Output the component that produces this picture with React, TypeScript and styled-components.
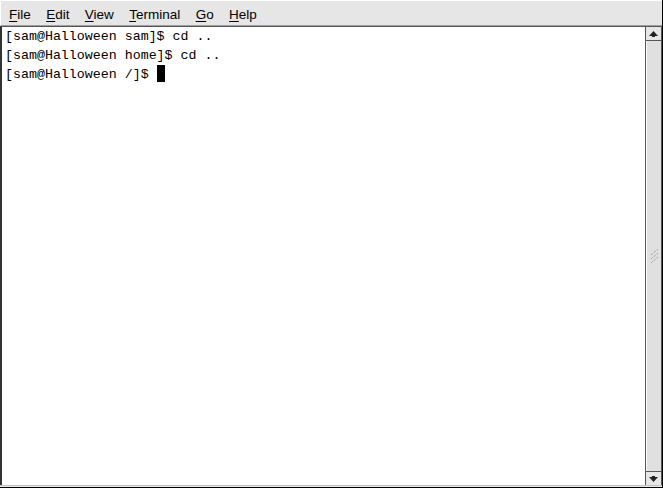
import styled, { createGlobalStyle } from 'styled-components';

const GlobalStyle = createGlobalStyle`
  html, body {
    margin: 0;
    padding: 0;
    background: #e6e6e6;
  }
`;

const Window = styled.div`
  width: 663px;
  height: 488px;
  box-sizing: border-box;
  display: flex;
  flex-direction: column;
  background: #e6e6e6;
  border-right: 1px solid #000;
  border-bottom: 1px solid #000;
`;

const MenuBar = styled.div`
  height: 26px;
  box-sizing: border-box;
  display: flex;
  align-items: center;
  padding: 3px 0 0 8px;
  gap: 15.4px;
  border-top: 1px solid #fff;
  border-left: 1px solid #fff;
  border-bottom: 1px solid #a0a0a0;
  font-family: 'Liberation Sans', Arial, sans-serif;
  font-size: 13.5px;
  color: #000;
`;

const MenuItem = styled.span`
  u {
    text-decoration: underline;
    text-underline-offset: 2px;
  }
`;

const Body = styled.div`
  flex: 1;
  display: flex;
  min-height: 0;
  border-bottom: 1px solid #c4c4c4;
  margin-bottom: 1px;
`;

const Screen = styled.div`
  flex: 1;
  background: #fff;
  border-left: 2px solid #333;
  border-top: 1px solid #555;
  padding: 0 0 0 3px;
  font-family: 'Liberation Mono', 'DejaVu Sans Mono', monospace;
  font-size: 13.3px;
  line-height: 19px;
  color: #000;
  white-space: pre;
`;

const Cursor = styled.span`
  display: inline-block;
  width: 8px;
  height: 17px;
  background: #000;
  vertical-align: -4px;
`;

const Scrollbar = styled.div`
  width: 15px;
  display: flex;
  flex-direction: column;
  background: #dcdcdc;
  border-left: 1px solid #555;
  border-right: 1px solid #555;
  border-top: 1px solid #555;
`;

const ArrowButton = styled.div<{ $down?: boolean }>`
  height: 13px;
  display: flex;
  align-items: center;
  justify-content: center;
  background: #e6e6e6;
  border-top: ${p => (p.$down ? '1px solid #555' : 'none')};
  border-bottom: ${p => (p.$down ? 'none' : '1px solid #555')};
`;

const Trough = styled.div`
  flex: 1;
  display: flex;
  align-items: center;
  justify-content: center;
  background: #e0e0e0;
  border-left: 1px solid #fff;
`;

function Arrow({ down }: { down?: boolean }) {
  return (
    <svg width="9" height="6" viewBox="0 0 9 6">
      <path
        d={down ? 'M0 1 L9 1 L4.5 6 Z' : 'M0 5 L9 5 L4.5 0 Z'}
        fill="#222"
      />
      <path d={down ? 'M3 0 H6 V2 H3 Z' : 'M3 4 H6 V6 H3 Z'} fill="#222" />
    </svg>
  );
}

function Grip() {
  return (
    <svg width="9" height="14" viewBox="0 0 9 14">
      <path d="M1 6 L8 0 M1 10 L8 4 M1 14 L8 8" stroke="#888" strokeWidth="1" strokeDasharray="1 1" />
    </svg>
  );
}

export default function App() {
  const menus = ['File', 'Edit', 'View', 'Terminal', 'Go', 'Help'];

  return (
    <>
      <GlobalStyle />
      <Window>
        <MenuBar>
          {menus.map(m => (
            <MenuItem key={m}>
              <u>{m[0]}</u>
              {m.slice(1)}
            </MenuItem>
          ))}
        </MenuBar>
        <Body>
          <Screen>
            {'[sam@Halloween sam]$ cd ..\n'}
            {'[sam@Halloween home]$ cd ..\n'}
            {'[sam@Halloween /]$ '}
            <Cursor />
          </Screen>
          <Scrollbar>
            <ArrowButton>
              <Arrow />
            </ArrowButton>
            <Trough>
              <Grip />
            </Trough>
            <ArrowButton $down>
              <Arrow down />
            </ArrowButton>
          </Scrollbar>
        </Body>
      </Window>
    </>
  );
}
